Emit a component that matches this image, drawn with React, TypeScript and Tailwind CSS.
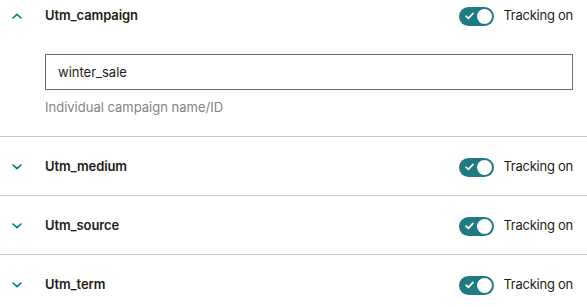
import { useState } from "react";

type Param = { key: string; open?: boolean; value?: string; hint?: string };

const params: Param[] = [
  { key: "Utm_campaign", open: true, value: "winter_sale", hint: "Individual campaign name/ID" },
  { key: "Utm_medium" },
  { key: "Utm_source" },
  { key: "Utm_term" },
];

function Chevron({ up }: { up?: boolean }) {
  return (
    <svg width="10" height="6" viewBox="0 0 10 6" className="text-[#007c89]">
      <path
        d={up ? "M1 5 L5 1.3 L9 5" : "M1 1 L5 4.7 L9 1"}
        fill="none"
        stroke="currentColor"
        strokeWidth="1.6"
        strokeLinecap="round"
        strokeLinejoin="round"
      />
    </svg>
  );
}

function Toggle() {
  return (
    <div className="flex h-[19px] w-[35px] items-center justify-between rounded-full bg-[#1f7a84] pl-[6px] pr-[2px]">
      <svg width="9" height="8" viewBox="0 0 9 8">
        <path d="M1 4.2 L3.4 6.4 L8 1.4" fill="none" stroke="white" strokeWidth="1.6" strokeLinecap="round" strokeLinejoin="round" />
      </svg>
      <span className="h-[15px] w-[15px] rounded-full bg-white" />
    </div>
  );
}

function Row({ p }: { p: Param }) {
  const [value, setValue] = useState(p.value ?? "");
  return (
    <div className="border-b border-[#c9c9c9] pt-[20px] pb-[18px] last:border-b-0">
      <div className="flex h-[20px] items-center">
        <div className="flex w-[45px] pl-[12px]">
          <Chevron up={p.open} />
        </div>
        <span className="text-[13px] font-semibold tracking-[-0.1px] text-[#241c15]">{p.key}</span>
        <div className="ml-auto mr-[14px] flex items-center gap-[9px]">
          <Toggle />
          <span className="text-[13px] tracking-[-0.25px] text-[#241c15]">Tracking on</span>
        </div>
      </div>
      {p.open && (
        <div className="mt-[28px] pb-[2px] pl-[45px] pr-[14px]">
          <input
            value={value}
            onChange={(e) => setValue(e.target.value)}
            className="h-[36px] w-full border border-[#6e6e6e] px-[12px] text-[13px] text-[#241c15] outline-none"
          />
          <p className="mt-[8px] text-[13px] leading-[18px] text-[#838383]">{p.hint}</p>
        </div>
      )}
    </div>
  );
}

export default function App() {
  return (
    <main className="h-[307px] w-[587px] overflow-hidden bg-white font-['Inter',sans-serif]">
      <div className="-mt-[14px]">
        {params.map((p) => (
          <Row key={p.key} p={p} />
        ))}
      </div>
    </main>
  );
}
